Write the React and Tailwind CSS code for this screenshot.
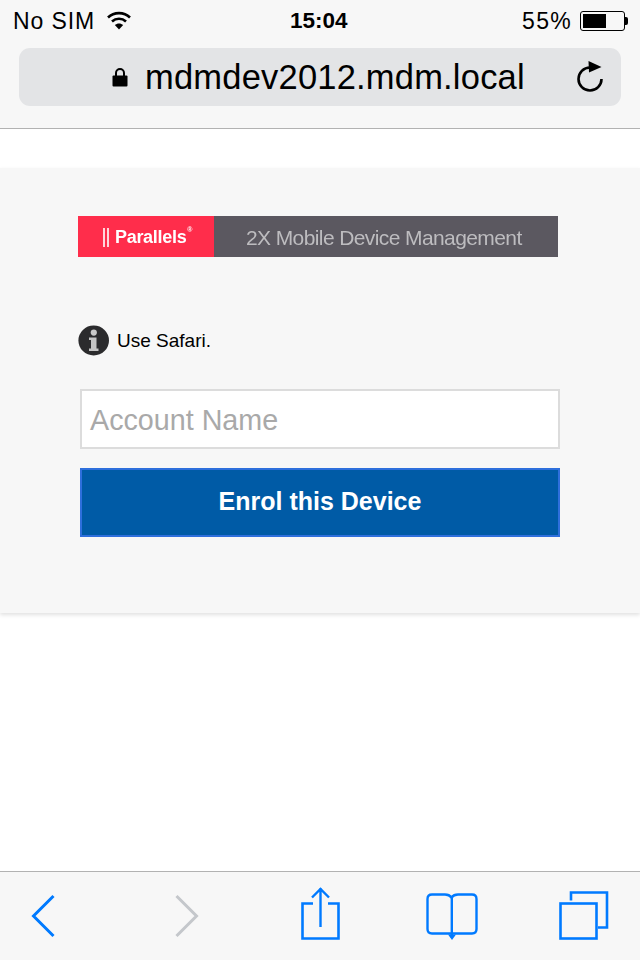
import React from 'react';

function Wifi() {
  return (
    <svg width="26" height="20" viewBox="0 0 26 20" fill="none" stroke="#000" strokeWidth="2.6">
      <path d="M2 7.5C8 1.7 18 1.7 24 7.5" />
      <path d="M6 11.5C10 7.8 16 7.8 20 11.5" />
      <path d="M13 19.5L8.8 15C11.2 12.9 14.8 12.9 17.2 15Z" fill="#000" stroke="none" />
    </svg>
  );
}

function Battery() {
  return (
    <div className="flex items-center">
      <div className="w-[45px] h-[20px] border border-black rounded-[3px] p-[2px]">
        <div className="w-[23px] h-full bg-black" />
      </div>
      <div className="w-[3px] h-[8px] bg-black rounded-r-[2px]" />
    </div>
  );
}

function Lock() {
  return (
    <svg width="16" height="20" viewBox="0 0 16 20">
      <path d="M4 9V6a4 4 0 0 1 8 0v3" fill="none" stroke="#000" strokeWidth="2" />
      <rect x="0.5" y="8.5" width="15" height="11" rx="1" fill="#000" />
    </svg>
  );
}

function Reload() {
  return (
    <svg width="28" height="32" viewBox="0 0 28 32" fill="none">
      <path d="M14 7.5A11.5 11.5 0 1 0 25.5 19" stroke="#000" strokeWidth="2.6" />
      <path d="M12.5 1L25.5 7L13 12.5Z" fill="#000" />
    </svg>
  );
}

function InfoIcon() {
  return (
    <svg width="32" height="31" viewBox="0 0 32 31" className="shrink-0">
      <ellipse cx="15.7" cy="15.5" rx="15.3" ry="15" fill="#2b2b2d" />
      <circle cx="15.8" cy="7.6" r="3.1" fill="#c9c9c9" />
      <path d="M11 12.5H18.5V23.5H20.5V26H11V23.5H13V15H11Z" fill="#c4c4c4" />
    </svg>
  );
}

function Toolbar() {
  return (
    <div className="mt-auto h-[89px] shrink-0 border-t border-[#b2b2b2] bg-[#f7f7f7]">
      <svg width="640" height="88" viewBox="0 0 640 88" fill="none" stroke="#007aff" strokeWidth="2.4" className="block">
        <path d="M53.5 24L33.5 44L53.5 64" strokeWidth="3" />
        <path d="M176.5 24L196.5 44L176.5 64" stroke="#c4c7cb" strokeWidth="3" />
        <path d="M313 31.5H302.5V66.5H338.5V31.5H328" strokeWidth="2.6" />
        <path d="M320.5 55V16M312 25.5L320.5 17L329 25.5" strokeWidth="2.4" />
        <path d="M451 61.5H432C429 61.5 427.5 60 427.5 57V27C427.5 24 429 22.5 432 22.5H445C448 22.5 450 23.5 451.5 25.5C453 23.5 455 22.5 458 22.5H472C475 22.5 476.5 24 476.5 27V57C476.5 60 475 61.5 472 61.5H452" strokeWidth="2.4" />
        <path d="M451.8 25V66" strokeWidth="2.4" />
        <path d="M448 62.5H456L452 68Z" fill="#007aff" stroke="none" />
        <rect x="560.5" y="31.5" width="36" height="35" strokeWidth="2.6" />
        <path d="M571 28.5V20.5H607V55.5H598" strokeWidth="2.6" />
      </svg>
    </div>
  );
}

export default function App() {
  return (
    <div className="w-[640px] h-[960px] flex flex-col bg-white overflow-hidden font-['Liberation_Sans',Arial,sans-serif] text-black">
      <div className="h-[129px] shrink-0 bg-[#f7f7f7] border-b border-[#b2b2b2]">
        <div className="relative h-[48px] flex items-center justify-between pl-[13px] pr-[12px] pb-[6px] text-[23px]">
          <div className="flex items-center gap-[11px]">
            <span className="tracking-[0.9px]">No SIM</span>
            <span className="-mt-[3px]"><Wifi /></span>
          </div>
          <span className="absolute left-[290px] top-[8px] font-bold text-[22.5px] leading-[26px]">15:04</span>
          <div className="flex items-center gap-[8px]">
            <span className="tracking-[1.3px]">55%</span>
            <Battery />
          </div>
        </div>
        <div className="mx-[19px] h-[58px] rounded-[11px] bg-[#e3e4e6] flex items-center pl-[93px] pr-[17px]">
          <Lock />
          <span className="ml-[17px] text-[34.5px] tracking-[0.2px] leading-none">mdmdev2012.mdm.local</span>
          <span className="ml-auto pb-[2px]"><Reload /></span>
        </div>
      </div>

      <div className="mt-[39px] h-[445px] shrink-0 bg-[#f7f7f7] pt-[48px] pl-[78px] pr-[80px] shadow-[0_2px_4px_rgba(0,0,0,0.12)]">
        <div className="flex w-[480px] h-[41px]">
          <div className="w-[136px] bg-[#ff2d4b] flex items-center pl-[25px] pt-[1px] text-white text-[18px] font-bold">
            <span className="w-[2px] h-[19px] bg-[#ffd5da]" />
            <span className="ml-[2px] w-[2px] h-[19px] bg-[#ffd5da]" />
            <span className="ml-[6px] blur-[0.5px] tracking-[-0.3px]">Parallels</span>
            <span className="ml-[1px] text-[7px] -mt-[14px] blur-[0.3px]">®</span>
          </div>
          <div className="flex-1 bg-[#5b5860] flex items-center pl-[32px] pt-[2px] text-[#bdbcbf] text-[21px]">
            <span className="blur-[0.7px] tracking-[-0.6px]">2X Mobile Device Management</span>
          </div>
        </div>

        <div className="mt-[68px] flex items-center gap-[7px] text-[19px]">
          <InfoIcon />
          <span className="pt-[1px]">Use Safari.</span>
        </div>

        <div className="mt-[33px] ml-[2px] w-[480px] h-[60px] border-2 border-[#dcdcdc] bg-white flex items-center pl-[8px] pt-[4px] text-[28.7px] text-[#a9a9a9]">
          Account Name
        </div>

        <div className="mt-[19px] ml-[2px] w-[480px] h-[69px] border-2 border-[#2e6fdc] bg-[#005ba6] flex items-center justify-center pb-[1px] text-white text-[25px] font-bold">
          Enrol this Device
        </div>
      </div>

      <Toolbar />
    </div>
  );
}
